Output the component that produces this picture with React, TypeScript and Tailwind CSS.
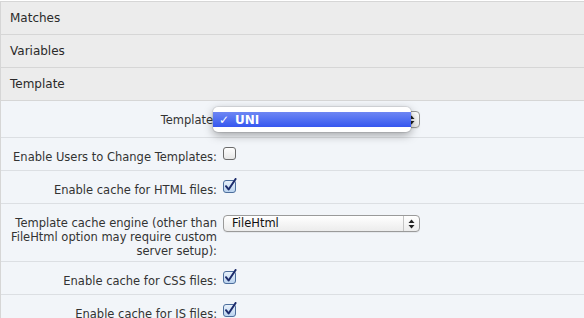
import React from "react";

const font = { fontFamily: '"DejaVu Sans", Verdana, sans-serif' };

function Checkbox({ checked }: { checked?: boolean }) {
  return (
    <svg width="14" height="15" viewBox="0 0 14 15" className="block">
      <defs>
        <linearGradient id={checked ? "cbg1" : "cbg0"} x1="0" y1="0" x2="0" y2="1">
          <stop offset="0" stopColor={checked ? "#eaf2fb" : "#ffffff"} />
          <stop offset="1" stopColor={checked ? "#b9d2ee" : "#e6e6e6"} />
        </linearGradient>
      </defs>
      <rect
        x="0.5"
        y="2.5"
        width="12"
        height="12"
        rx="2.5"
        fill={`url(#${checked ? "cbg1" : "cbg0"})`}
        stroke={checked ? "#4d6e9c" : "#6b6b6b"}
      />
      {checked && (
        <path d="M3 8.2 L5.6 11.5 L12.6 1" fill="none" stroke="#1c2b6b" strokeWidth="2" strokeLinecap="round" strokeLinejoin="round" />
      )}
    </svg>
  );
}

function SelectBox({ text }: { text?: string }) {
  return (
    <div className="relative flex h-[17px] w-[197px] items-center rounded-[4px] border border-[#9a9a9a] bg-gradient-to-b from-[#ffffff] to-[#ececec] shadow-[0_1px_0_rgba(0,0,0,0.05)]">
      <span className="pl-[8px] text-[11.5px] leading-none text-[#111]">{text}</span>
      <div className="absolute right-0 top-0 flex h-full w-[16px] items-center justify-center border-l border-[#c4c4c4]">
        <svg width="7" height="10" viewBox="0 0 7 10">
          <path d="M3.5 0.5 L6.5 4 L0.5 4 Z" fill="#222" />
          <path d="M3.5 9.5 L6.5 6 L0.5 6 Z" fill="#222" />
        </svg>
      </div>
    </div>
  );
}

function Header({ title }: { title: string }) {
  return (
    <div className="flex h-[33px] items-center border-b border-[#d6d6d6] bg-[#ececec] pl-[9px] text-[12px] text-[#2a2a2a]">
      {title}
    </div>
  );
}

function Row({
  label,
  children,
  last,
}: {
  label: React.ReactNode;
  children?: React.ReactNode;
  last?: boolean;
}) {
  return (
    <div className={`flex ${last ? "" : "border-b border-[#dcdfe3]"}`}>
      <div className="w-[219px] shrink-0 pr-[3px] pt-[12px] pb-[6px] text-right text-[11.5px] leading-[14px] text-[#333]">
        {label}
      </div>
      <div className="pl-[3px] pt-[7px]">{children}</div>
    </div>
  );
}

export default function App() {
  return (
    <div className="h-[318px] w-[584px] overflow-hidden bg-white pt-px" style={font}>
      <div className="border-l border-t border-[#d6d6d6]">
        <Header title="Matches" />
        <Header title="Variables" />
        <Header title="Template" />
        <div className="bg-[#f2f5f9]">
          <div className="flex border-b border-[#dcdfe3]">
            <div className="w-[219px] shrink-0 pr-[3px] pt-[12px] pb-[10px] text-right text-[11.5px] leading-[14px] text-[#333]">
              Template:
            </div>
            <div className="relative pl-[3px] pt-[10px]">
              <SelectBox />
              <div className="absolute left-[-7px] top-[6px] h-[25px] w-[198px] rounded-[5px] bg-white py-[5px] shadow-[0_3px_10px_rgba(0,0,0,0.35),0_0_0_1px_rgba(0,0,0,0.08)]">
                <div className="flex h-[15px] items-center bg-gradient-to-b from-[#6e86f3] to-[#3656ef] text-[12px] font-bold text-white">
                  <span className="w-[22px] pl-[6px] font-normal">✓</span>
                  <span>UNI</span>
                </div>
              </div>
            </div>
          </div>
          <Row label="Enable Users to Change Templates:">
            <Checkbox />
          </Row>
          <Row label="Enable cache for HTML files:">
            <Checkbox checked />
          </Row>
          <div className="flex border-b border-[#dcdfe3]">
            <div className="w-[219px] shrink-0 pr-[3px] pt-[12px] pb-[3px] text-right text-[11.5px] leading-[14px] text-[#333]">
              Template cache engine (other than
              <br />
              FileHtml option may require custom
              <br />
              server setup):
            </div>
            <div className="pl-[3px] pt-[11px]">
              <SelectBox text="FileHtml" />
            </div>
          </div>
          <Row label="Enable cache for CSS files:">
            <Checkbox checked />
          </Row>
          <Row label="Enable cache for JS files:" last>
            <Checkbox checked />
          </Row>
        </div>
      </div>
    </div>
  );
}
